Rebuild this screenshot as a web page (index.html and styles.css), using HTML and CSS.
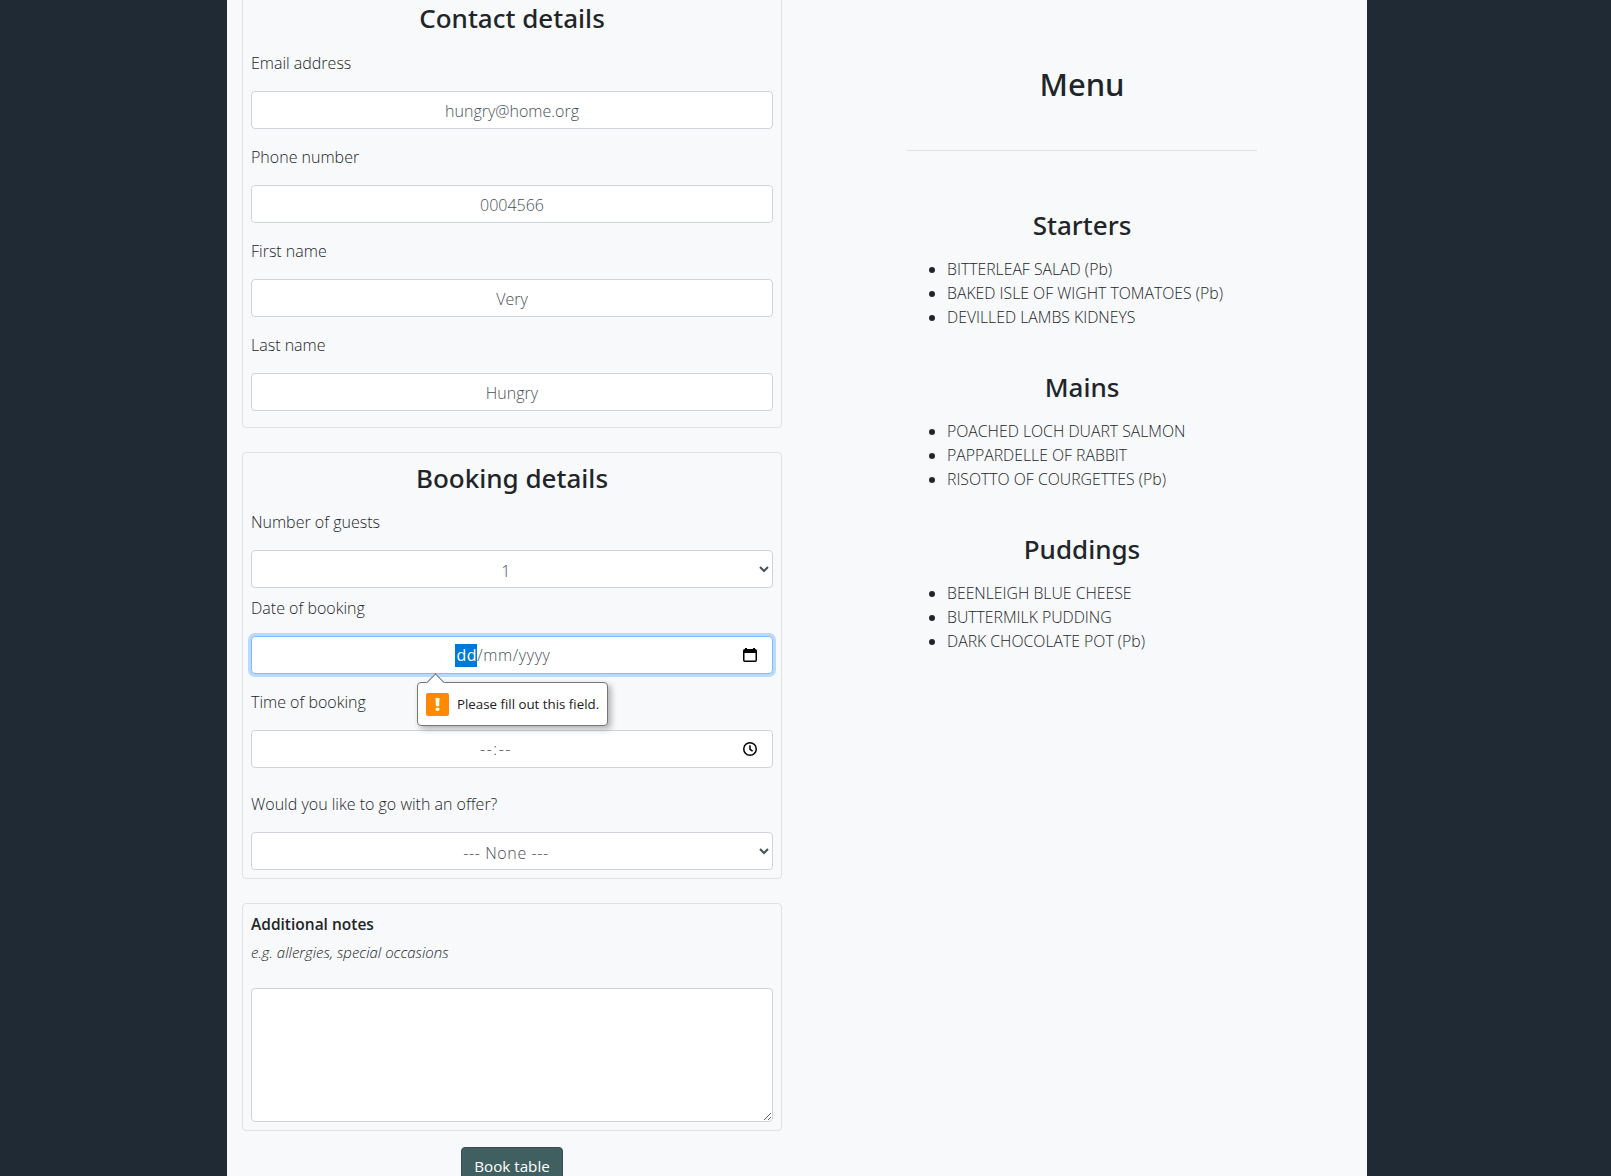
FILE: index.html
```html
<!DOCTYPE html>
<html lang="en">
<head>
  <meta charset="UTF-8" />
  <meta name="viewport" content="width=device-width, initial-scale=1.0"/>
  <title>Book a table</title>
  <link rel="stylesheet" href="styles.css">
</head>
<body>
  <div class="page">
    <form class="booking">
      <fieldset class="panel panel-contact">
        <h2>Contact details</h2>
        <div class="group">
          <label for="email">Email address</label>
          <input class="control" id="email" type="text" value="hungry@home.org">
        </div>
        <div class="group">
          <label for="phone">Phone number</label>
          <input class="control" id="phone" type="text" value="0004566">
        </div>
        <div class="group">
          <label for="first">First name</label>
          <input class="control" id="first" type="text" value="Very">
        </div>
        <div class="group">
          <label for="last">Last name</label>
          <input class="control" id="last" type="text" value="Hungry">
        </div>
      </fieldset>

      <fieldset class="panel">
        <h2>Booking details</h2>
        <div class="group group-tight">
          <label for="guests">Number of guests</label>
          <select class="control" id="guests">
            <option>1</option>
            <option>2</option>
          </select>
        </div>
        <div class="group">
          <label>Date of booking</label>
          <div class="control picker picker-focus">
            <span class="picker-text"><span class="picker-selected">dd</span>/mm/yyyy</span>
            <svg class="picker-icon" viewBox="0 0 16 16" width="16" height="16">
              <path d="M4 1v2M12 1v2" stroke="#000" stroke-width="2" fill="none"/>
              <rect x="1.75" y="2.75" width="12.5" height="11.5" rx="1" fill="none" stroke="#000" stroke-width="1.5"/>
              <rect x="2" y="3" width="12" height="3" fill="#000"/>
            </svg>
          </div>
          <div class="tip">
            <span class="tip-arrow"></span>
            <span class="tip-icon">!</span>
            <span>Please fill out this field.</span>
          </div>
        </div>
        <div class="group group-wide">
          <label>Time of booking</label>
          <div class="control picker">
            <span class="picker-text picker-time">--:--</span>
            <svg class="picker-icon" viewBox="0 0 16 16" width="16" height="16">
              <circle cx="8" cy="8" r="6.25" fill="none" stroke="#000" stroke-width="1.5"/>
              <path d="M8 4.2V8.3L10.6 10" fill="none" stroke="#000" stroke-width="1.5"/>
            </svg>
          </div>
        </div>
        <div class="group group-tight">
          <label for="offer">Would you like to go with an offer?</label>
          <select class="control" id="offer">
            <option>--- None ---</option>
          </select>
        </div>
      </fieldset>

      <fieldset class="panel">
        <div class="notes-title">Additional notes</div>
        <div class="notes-hint">e.g. allergies, special occasions</div>
        <textarea class="control notes-box"></textarea>
      </fieldset>

      <div class="actions">
        <button class="book" type="button">Book table</button>
      </div>
    </form>

    <div class="menu">
      <h1>Menu</h1>
      <hr>
      <section class="course">
        <h3>Starters</h3>
        <ul>
          <li>BITTERLEAF SALAD (Pb)</li>
          <li>BAKED ISLE OF WIGHT TOMATOES (Pb)</li>
          <li>DEVILLED LAMBS KIDNEYS</li>
        </ul>
      </section>
      <section class="course">
        <h3>Mains</h3>
        <ul>
          <li>POACHED LOCH DUART SALMON</li>
          <li>PAPPARDELLE OF RABBIT</li>
          <li>RISOTTO OF COURGETTES (Pb)</li>
        </ul>
      </section>
      <section class="course">
        <h3>Puddings</h3>
        <ul>
          <li>BEENLEIGH BLUE CHEESE</li>
          <li>BUTTERMILK PUDDING</li>
          <li>DARK CHOCOLATE POT (Pb)</li>
        </ul>
      </section>
    </div>
  </div>
</body>
</html>
```

FILE: styles.css
```css
html, body {
  height: 100%;
  margin: 0;
  overflow: hidden;
}
body {
  box-sizing: border-box;
  padding-right: 17px;
  background-color: #202a35;
  color: #212529;
  font-family: "Open Sans", "Noto Sans", sans-serif;
  font-size: 16px;
  font-weight: 300;
  line-height: 24px;
}
.page {
  width: 1140px;
  height: 1176px;
  margin: 0 auto;
  background-color: #f8f9fa;
  display: grid;
  grid-template-columns: 570px 570px;
}
.booking {
  padding: 0 15px;
  margin-top: -8px;
}
.panel {
  border: 1px solid #dee2e6;
  border-radius: 4px;
  margin: 0 0 24px;
  padding: 8px 8px 8px;
  min-width: 0;
}
.panel-contact {
  padding-bottom: 0;
}
h1, h2, h3 {
  font-family: "Noto Sans", "Open Sans", sans-serif;
  font-weight: 500;
  text-align: center;
}
h2 {
  margin: 0 0 14px;
  font-size: 26px;
  line-height: 35px;
}
.panel-contact h2 {
  margin-bottom: 15px;
}
label {
  display: block;
  margin-bottom: 16px;
}
.group {
  margin-bottom: 16px;
  position: relative;
}
.group-tight {
  margin-bottom: 8px;
}
.group-wide {
  margin-bottom: 24px;
}
.panel > .group:last-child.group-tight {
  margin-bottom: 0;
}
.control {
  display: block;
  box-sizing: border-box;
  width: 100%;
  height: 38px;
  padding: 7px 12px 5px;
  background-color: #fff;
  border: 1px solid #ced4da;
  border-radius: 4px;
  color: #495057;
  font: inherit;
  text-align: center;
}
select.control {
  padding: 8px 8px 5px;
  letter-spacing: .6px;
}
.picker {
  display: flex;
  align-items: center;
  padding: 6px 12px;
}
.picker-focus {
  border-color: #80bdff;
  box-shadow: 0 0 0 3px rgba(0, 123, 255, .25);
}
.picker-text {
  flex: 1;
  letter-spacing: .6px;
}
.picker-time {
  padding-right: 14px;
  letter-spacing: 1.5px;
  line-height: 22px;
}
.picker-selected {
  display: inline-block;
  padding-left: 1px;
  background-color: #0078d7;
  color: #fff;
  font-weight: 400;
  line-height: 23px;
}
.picker-icon {
  margin-right: 2px;
}
.tip {
  position: absolute;
  left: 166px;
  top: 86px;
  z-index: 2;
  display: flex;
  align-items: center;
  gap: 8px;
  height: 44px;
  box-sizing: border-box;
  padding: 0 8px;
  background: #fff;
  border: 1px solid #767676;
  border-radius: 4px;
  box-shadow: 3px 3px 6px rgba(0, 0, 0, .3);
  color: #202020;
  font-size: 13.3px;
  font-weight: 400;
  white-space: nowrap;
}
.tip-arrow {
  position: absolute;
  left: 11px;
  top: -7px;
  width: 12px;
  height: 12px;
  background: #fff;
  border-left: 1px solid #767676;
  border-top: 1px solid #767676;
  transform: rotate(45deg);
}
.tip-icon {
  width: 23px;
  height: 23px;
  border-radius: 2px;
  background: #ff8a00;
  color: #fff;
  font-size: 18px;
  font-weight: 800;
  line-height: 23px;
  text-align: center;
}
.notes-title {
  font-size: 15.5px;
  font-weight: 600;
}
.notes-hint {
  margin-top: 4px;
  margin-bottom: 24px;
  font-size: 15px;
  font-style: italic;
}
.notes-box {
  height: 134px;
  resize: vertical;
}
.actions {
  margin-top: -8px;
  text-align: center;
}
.book {
  height: 38px;
  width: 102px;
  background-color: #3f5f60;
  border: 1px solid #35504f;
  border-radius: 4px;
  color: #fff;
  font: inherit;
  font-size: 15.2px;
  font-weight: 400;
}
.menu {
  padding: 0 110px;
  padding-top: 62px;
}
h1 {
  margin: 0 0 44px;
  font-size: 31px;
  line-height: 44px;
}
hr {
  border: 0;
  border-top: 1px solid #dee2e6;
  margin: 0 0 58px;
}
.course {
  margin-bottom: 42px;
}
h3 {
  margin: 0 0 16px;
  font-size: 26px;
  line-height: 32px;
}
ul {
  margin: 0;
  padding-left: 40px;
}
li {
  font-size: 15.8px;
}
```
